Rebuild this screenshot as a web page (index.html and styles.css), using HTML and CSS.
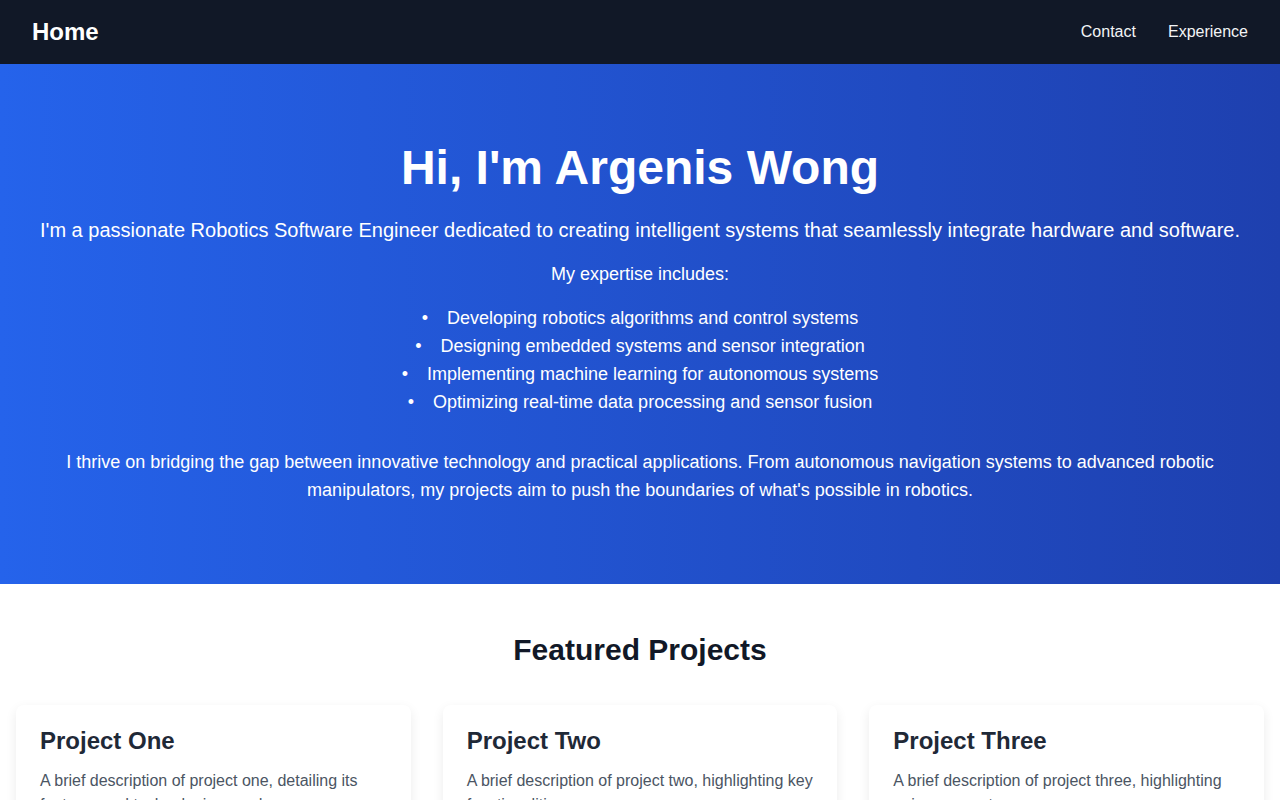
FILE: index.html
```html
<!DOCTYPE html>
<html lang="en">
<head>
  <meta charset="UTF-8" />
  <meta name="viewport" content="width=device-width, initial-scale=1.0"/>
  <title>Argenis Wong</title>
  <link rel="stylesheet" href="styles.css">
</head>
<body>

  <!-- Top navigation -->
  <nav class="navbar">
    <a href="#" class="brand">Home</a>
    <div class="nav-links">
      <a href="#contact">Contact</a>
      <a href="#experience">Experience</a>
    </div>
  </nav>

  <!-- Hero -->
  <header class="hero">
    <h1>Hi, I'm Argenis Wong</h1>
    <p class="lead">I'm a passionate Robotics Software Engineer dedicated to creating intelligent systems that seamlessly integrate hardware and software.</p>
    <p class="expertise-title">My expertise includes:</p>
    <ul class="expertise">
      <li>Developing robotics algorithms and control systems</li>
      <li>Designing embedded systems and sensor integration</li>
      <li>Implementing machine learning for autonomous systems</li>
      <li>Optimizing real-time data processing and sensor fusion</li>
    </ul>
    <p class="about">I thrive on bridging the gap between innovative technology and practical applications. From autonomous navigation systems to advanced robotic manipulators, my projects aim to push the boundaries of what's possible in robotics.</p>
  </header>

  <!-- Projects -->
  <section class="projects">
    <h2>Featured Projects</h2>
    <div class="project-grid">
      <div class="card">
        <h3>Project One</h3>
        <p>A brief description of project one, detailing its features and technologies used.</p>
      </div>
      <div class="card">
        <h3>Project Two</h3>
        <p>A brief description of project two, highlighting key functionalities.</p>
      </div>
      <div class="card">
        <h3>Project Three</h3>
        <p>A brief description of project three, highlighting unique aspects.</p>
      </div>
    </div>
  </section>

</body>
</html>
```

FILE: styles.css
```css
body {
  font-family: "Liberation Sans", Arial, sans-serif;
  margin: 0;
  background-color: #ffffff;
  color: #1f2937;
}

/* Navbar */
.navbar {
  display: flex;
  justify-content: space-between;
  align-items: center;
  height: 64px;
  padding: 0 32px;
  background-color: #111827;
  box-sizing: border-box;
}

.brand {
  color: white;
  font-size: 24px;
  font-weight: bold;
  text-decoration: none;
}

.nav-links {
  display: flex;
  gap: 32px;
}

.nav-links a {
  color: #f3f4f6;
  font-size: 16px;
  text-decoration: none;
}

/* Hero */
.hero {
  background: linear-gradient(to right, #2563eb, #1e40af);
  color: white;
  text-align: center;
  padding: 80px 40px;
  height: 520px;
  box-sizing: border-box;
}

.hero h1 {
  font-size: 48px;
  line-height: 1;
  margin: 0 0 24px;
}

.lead {
  font-size: 20px;
  line-height: 28px;
  margin: 0 0 16px;
}

.expertise-title {
  font-size: 18px;
  line-height: 28px;
  margin: 0 0 16px;
}

.expertise {
  list-style: none;
  padding: 0;
  margin: 0 0 32px;
  font-size: 18px;
  line-height: 28px;
}

.expertise li::before {
  content: "•";
  margin-right: 19px;
}

.about {
  font-size: 18px;
  line-height: 28px;
  max-width: 1152px;
  margin: 0 auto;
}

/* Projects */
.projects {
  padding: 48px 16px;
}

.projects h2 {
  text-align: center;
  font-size: 30px;
  line-height: 36px;
  margin: 0 0 37px;
  color: #111827;
}

.project-grid {
  display: grid;
  grid-template-columns: repeat(3, 1fr);
  gap: 32px;
}

.card {
  background: white;
  border-radius: 8px;
  padding: 24px;
  box-shadow: 0 4px 12px rgba(0, 0, 0, 0.08);
}

.card h3 {
  font-size: 24px;
  line-height: 24px;
  margin: 0 0 16px;
  color: #1f2937;
}

.card p {
  font-size: 16px;
  line-height: 24px;
  margin: 0;
  color: #4b5563;
}
```
